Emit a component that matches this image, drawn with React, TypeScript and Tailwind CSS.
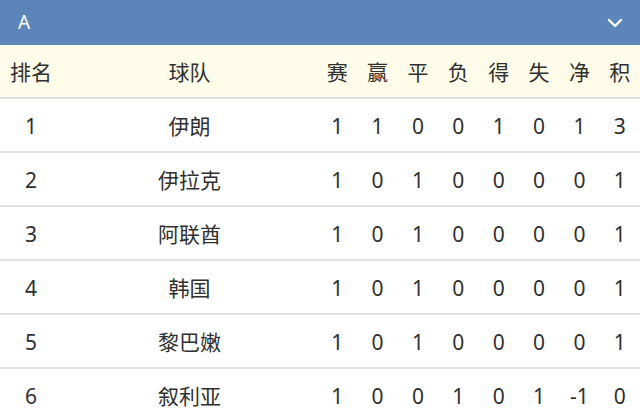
import { ChevronDown } from 'lucide-react';

// ─── data ─────────────────────────────────────────────────────────────────────

const HEADS = ['赛', '赢', '平', '负', '得', '失', '净', '积'];

const ROWS: { rank: number; team: string; stats: number[] }[] = [
  { rank: 1, team: '伊朗', stats: [1, 1, 0, 0, 1, 0, 1, 3] },
  { rank: 2, team: '伊拉克', stats: [1, 0, 1, 0, 0, 0, 0, 1] },
  { rank: 3, team: '阿联酋', stats: [1, 0, 1, 0, 0, 0, 0, 1] },
  { rank: 4, team: '韩国', stats: [1, 0, 1, 0, 0, 0, 0, 1] },
  { rank: 5, team: '黎巴嫩', stats: [1, 0, 1, 0, 0, 0, 0, 1] },
  { rank: 6, team: '叙利亚', stats: [1, 0, 0, 1, 0, 1, -1, 0] },
];

const GRID = 'grid grid-cols-[62px_255px_repeat(8,1fr)] items-center pt-[3px]';

// ─── page ─────────────────────────────────────────────────────────────────────

export default function App() {
  return (
    <div
      className="w-[640px] h-[419px] overflow-hidden bg-white text-[#303030]"
      style={{ fontFamily: '"Noto Sans", "Noto Sans CJK SC", sans-serif' }}
    >
      {/* group bar */}
      <div className="h-[45px] bg-[#5c86ba] flex items-center justify-between pl-[18px] pr-[13px] text-white">
        <span className="text-[19px] leading-none">A</span>
        <ChevronDown size={24} strokeWidth={2.4} />
      </div>

      {/* column heads */}
      <div className={`${GRID} h-[54px] bg-[#fffcea] border-b-2 border-[#dedede] text-[21px]`}>
        <span className="text-center">排名</span>
        <span className="text-center">球队</span>
        {HEADS.map(h => (
          <span key={h} className="text-center">{h}</span>
        ))}
      </div>

      {/* standings */}
      {ROWS.map(r => (
        <div key={r.rank} className={`${GRID} h-[54px] border-b-2 border-[#e2e2e2] text-[21px]`}>
          <span className="text-center">{r.rank}</span>
          <span className="text-center">{r.team}</span>
          {r.stats.map((s, i) => (
            <span key={i} className="text-center">{s}</span>
          ))}
        </div>
      ))}
    </div>
  );
}
